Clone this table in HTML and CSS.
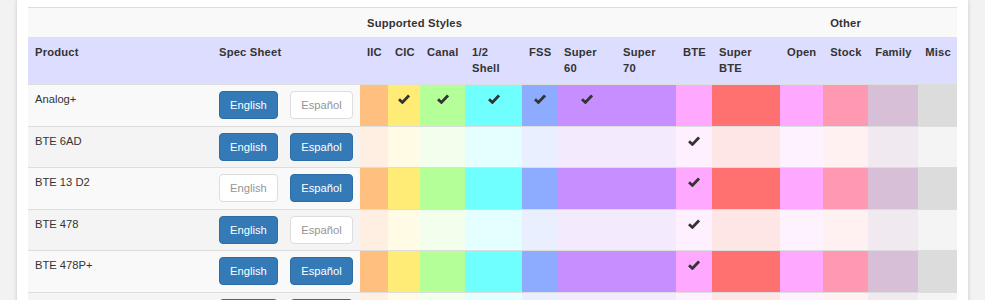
FILE: index.html
```html
<!DOCTYPE html>
<html>
<head>
<meta charset="utf-8">
<link rel="stylesheet" href="styles.css">
</head>
<body>
<div class="card">
<table class="grid">
<colgroup>
<col class="w-prod"><col class="w-spec"><col class="w-iic"><col class="w-cic"><col class="w-canal"><col class="w-shell"><col class="w-fss"><col class="w-s60"><col class="w-s70"><col class="w-bte"><col class="w-sbte"><col class="w-open"><col class="w-stock"><col class="w-family"><col class="w-misc">
</colgroup>
<thead>
<tr class="group"><th colspan="2"></th><th colspan="10">Supported Styles</th><th colspan="3">Other</th></tr>
<tr class="heads"><th>Product</th><th>Spec Sheet</th><th>IIC</th><th>CIC</th><th>Canal</th><th>1/2 Shell</th><th>FSS</th><th>Super 60</th><th>Super 70</th><th>BTE</th><th>Super BTE</th><th>Open</th><th>Stock</th><th>Family</th><th>Misc</th></tr>
</thead>
<tbody>
<tr class="odd">
<td class="prod">Analog+</td>
<td class="spec"><div class="btns"><span class="btn primary">English</span><span class="btn off">Español</span></div></td>
<td class="c iic"></td>
<td class="c cic"><svg class="chk" viewBox="0 0 12 10"><path d="M1 5.2 L4.4 8.4 L11 1.4"/></svg></td>
<td class="c canal"><svg class="chk" viewBox="0 0 12 10"><path d="M1 5.2 L4.4 8.4 L11 1.4"/></svg></td>
<td class="c shell"><svg class="chk" viewBox="0 0 12 10"><path d="M1 5.2 L4.4 8.4 L11 1.4"/></svg></td>
<td class="c fss"><svg class="chk" viewBox="0 0 12 10"><path d="M1 5.2 L4.4 8.4 L11 1.4"/></svg></td>
<td class="c sup"><svg class="chk" viewBox="0 0 12 10"><path d="M1 5.2 L4.4 8.4 L11 1.4"/></svg></td>
<td class="c sup"></td>
<td class="c bte"></td>
<td class="c sbte"></td>
<td class="c open"></td>
<td class="c stock"></td>
<td class="c family"></td>
<td class="c misc"></td>
</tr>
<tr class="even">
<td class="prod">BTE 6AD</td>
<td class="spec"><div class="btns"><span class="btn primary">English</span><span class="btn primary">Español</span></div></td>
<td class="c iic"></td><td class="c cic"></td><td class="c canal"></td><td class="c shell"></td><td class="c fss"></td><td class="c sup"></td><td class="c sup"></td>
<td class="c bte"><svg class="chk" viewBox="0 0 12 10"><path d="M1 5.2 L4.4 8.4 L11 1.4"/></svg></td>
<td class="c sbte"></td><td class="c open"></td><td class="c stock"></td><td class="c family"></td><td class="c misc"></td>
</tr>
<tr class="odd">
<td class="prod">BTE 13 D2</td>
<td class="spec"><div class="btns"><span class="btn off">English</span><span class="btn primary">Español</span></div></td>
<td class="c iic"></td><td class="c cic"></td><td class="c canal"></td><td class="c shell"></td><td class="c fss"></td><td class="c sup"></td><td class="c sup"></td>
<td class="c bte"><svg class="chk" viewBox="0 0 12 10"><path d="M1 5.2 L4.4 8.4 L11 1.4"/></svg></td>
<td class="c sbte"></td><td class="c open"></td><td class="c stock"></td><td class="c family"></td><td class="c misc"></td>
</tr>
<tr class="even">
<td class="prod">BTE 478</td>
<td class="spec"><div class="btns"><span class="btn primary">English</span><span class="btn off">Español</span></div></td>
<td class="c iic"></td><td class="c cic"></td><td class="c canal"></td><td class="c shell"></td><td class="c fss"></td><td class="c sup"></td><td class="c sup"></td>
<td class="c bte"><svg class="chk" viewBox="0 0 12 10"><path d="M1 5.2 L4.4 8.4 L11 1.4"/></svg></td>
<td class="c sbte"></td><td class="c open"></td><td class="c stock"></td><td class="c family"></td><td class="c misc"></td>
</tr>
<tr class="odd">
<td class="prod">BTE 478P+</td>
<td class="spec"><div class="btns"><span class="btn primary">English</span><span class="btn primary">Español</span></div></td>
<td class="c iic"></td><td class="c cic"></td><td class="c canal"></td><td class="c shell"></td><td class="c fss"></td><td class="c sup"></td><td class="c sup"></td>
<td class="c bte"><svg class="chk" viewBox="0 0 12 10"><path d="M1 5.2 L4.4 8.4 L11 1.4"/></svg></td>
<td class="c sbte"></td><td class="c open"></td><td class="c stock"></td><td class="c family"></td><td class="c misc"></td>
</tr>
<tr class="even">
<td class="prod">BTE 500</td>
<td class="spec"><div class="btns"><span class="btn primary">English</span><span class="btn primary">Español</span></div></td>
<td class="c iic"></td><td class="c cic"></td><td class="c canal"></td><td class="c shell"></td><td class="c fss"></td><td class="c sup"></td><td class="c sup"></td>
<td class="c bte"></td>
<td class="c sbte"></td><td class="c open"></td><td class="c stock"></td><td class="c family"></td><td class="c misc"></td>
</tr>
</tbody>
</table>
</div>
</body>
</html>
```
FILE: styles.css
```css
html, body {
  margin: 0;
  padding: 0;
}
body {
  background: #f2f2f2;
  font-family: "Liberation Sans", Arial, sans-serif;
  font-size: 11.2px;
  line-height: 16px;
  color: #333;
}
.card {
  width: 929px;
  margin: 0 auto;
  padding: 7px 11px 0;
  background: #fff;
  box-shadow: 0 0 4px rgba(0, 0, 0, 0.18);
}
.grid {
  width: 929px;
  table-layout: fixed;
  border-collapse: collapse;
  border-top: 1px solid #ddd;
}
.w-prod { width: 184px; }
.w-spec { width: 148px; }
.w-iic { width: 28px; }
.w-cic { width: 32px; }
.w-canal { width: 45px; }
.w-shell { width: 57px; }
.w-fss { width: 35px; }
.w-s60 { width: 59px; }
.w-s70 { width: 60px; }
.w-bte { width: 36px; }
.w-sbte { width: 68px; }
.w-open { width: 43px; }
.w-stock { width: 45px; }
.w-family { width: 50px; }
.w-misc { width: 39px; }

th {
  text-align: left;
  font-weight: bold;
  vertical-align: top;
  letter-spacing: 0.2px;
  padding: 7px 7px 8px;
}
.group th {
  background: #f9f9f9;
  padding: 6.5px 7px;
}
.heads th {
  background: #ddf;
}
tbody td {
  padding: 6.25px 7px;
  vertical-align: top;
  border-top: 1px solid #ddd;
}
tr.odd { background: #f9f9f9; }
tr.even { background: #f4f4f4; }
td.c {
  padding-left: 0;
  padding-right: 0;
  text-align: center;
}
.chk {
  display: block;
  width: 12px;
  height: 10px;
  margin: 3px auto 0;
}
.chk path {
  fill: none;
  stroke: #333;
  stroke-width: 2.8;
  stroke-linejoin: miter;
  stroke-linecap: butt;
}
.btns {
  display: flex;
  gap: 12.5px;
}
.btn {
  display: inline-block;
  padding: 5px 10px;
  line-height: 16px;
  border: 1px solid transparent;
  border-radius: 4px;
  white-space: nowrap;
}
.btn.primary {
  background: #337ab7;
  border-color: #2e6da4;
  color: #fff;
}
.btn.off {
  background: #fff;
  border-color: #ddd;
  color: #959595;
}

.odd .iic { background: #ffbf7f; }
.odd .cic { background: #ffec76; }
.odd .canal { background: #b5ff98; }
.odd .shell { background: #70ffff; }
.odd .fss { background: #8eacff; }
.odd .sup { background: #c68eff; }
.odd .bte { background: #ffa8ff; }
.odd .sbte { background: #ff7070; }
.odd .open { background: #ffa8ff; }
.odd .stock { background: #ff99b2; }
.odd .family { background: #d7bfd7; }
.odd .misc { background: #dcdcdc; }

.even .iic { background: #ffefe2; }
.even .cic { background: #fffbe5; }
.even .canal { background: #f2ffec; }
.even .shell { background: #e4ffff; }
.even .fss { background: #e9efff; }
.even .sup { background: #f4eafe; }
.even .bte { background: #fff0ff; }
.even .sbte { background: #ffe6e6; }
.even .open { background: #fff2ff; }
.even .stock { background: #fff0f2; }
.even .family { background: #f0e9f0; }
.even .misc { background: #f4f4f4; }
```
